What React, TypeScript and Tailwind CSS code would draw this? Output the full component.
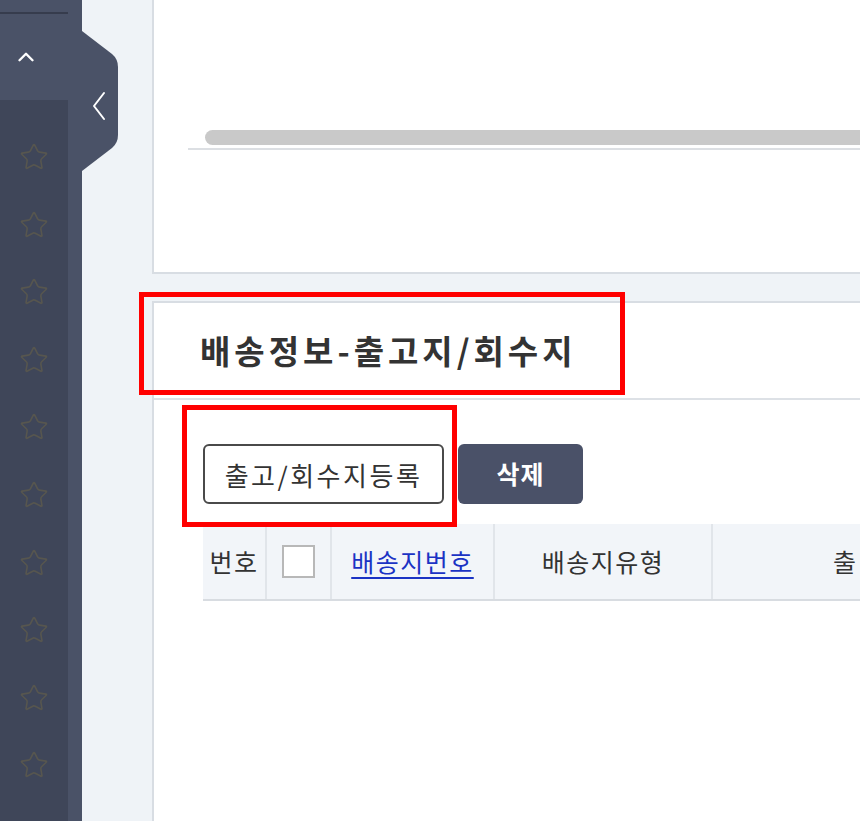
import React from 'react';
import { ChevronUp, Star } from 'lucide-react';

const font = { fontFamily: '"Noto Sans CJK KR", "Noto Sans", sans-serif' };

function Sidebar() {
  return (
    <div className="relative flex h-full w-[82px] shrink-0 flex-col bg-[#4a5267]">
      <div className="h-[100px] shrink-0">
        <div className="mt-[12px] h-[2px] w-[68px] bg-[#363c4d]" />
        <div className="flex w-[52px] justify-center pt-[30px]">
          <ChevronUp className="h-[26px] w-[26px] text-white" strokeWidth={2.2} />
        </div>
      </div>
      <div className="flex flex-1">
        <div className="flex w-[68px] flex-col items-center bg-[#3f4659] pt-[42px]">
          {Array.from({ length: 10 }).map((_, i) => (
            <div key={i} className="flex h-[67.6px] shrink-0 items-start justify-center">
              <Star className="h-[30px] w-[30px] text-[#57564f]" strokeWidth={1.3} />
            </div>
          ))}
        </div>
        <div className="w-[14px] bg-[#4a5267]" />
      </div>
    </div>
  );
}

function CollapseTab() {
  return (
    <div className="absolute left-[82px] top-[31px] h-[140px] w-[37px]">
      <svg width="37" height="140" viewBox="0 0 37 140" className="absolute inset-0">
        <path d="M0 0 L30 23 Q36 28 36 36 L36 104 Q36 112 30 117 L0 140 Z" fill="#4a5267" />
      </svg>
      <svg width="16" height="30" viewBox="0 0 16 30" className="absolute left-[9px] top-[60px]">
        <path d="M13 2 L3 15 L13 28" fill="none" stroke="white" strokeWidth="2" strokeLinecap="round" strokeLinejoin="round" />
      </svg>
    </div>
  );
}

export default function App() {
  return (
    <div className="relative flex h-[821px] w-[860px] overflow-hidden bg-[#eff3f7]" style={font}>
      <Sidebar />
      <CollapseTab />
      <div className="flex flex-1 flex-col pl-[70px]">
        <div className="h-[274px] shrink-0 border-b-2 border-l-2 border-[#d8dde3] bg-white">
          <div className="pl-[51px] pt-[130px]">
            <div className="h-[15px] rounded-l-full bg-[#c9c9c9]" />
          </div>
          <div className="ml-[34px] mt-[3px] h-[2px] bg-[#dcdfe3]" />
        </div>
        <div className="mt-[27px] flex flex-1 flex-col border-l-2 border-t-2 border-[#d8dde3] bg-white">
          <div className="flex h-[97px] items-center border-b-2 border-[#dde1e6] pl-[46px]">
            <h2 className="text-[33px] font-bold tracking-[4px] text-[#333]">배송정보-출고지/회수지</h2>
          </div>
          <div className="flex gap-[14px] pl-[49px] pt-[44px]">
            <button className="h-[60px] w-[241px] rounded-[6px] border-2 border-[#4a4a4a] bg-white text-[26px] tracking-[2.5px] text-[#333]">
              출고/회수지등록
            </button>
            <button className="h-[60px] w-[125px] rounded-[6px] bg-[#4a5168] text-[25px] font-bold tracking-[1px] text-white">
              삭제
            </button>
          </div>
          <div className="ml-[49px] mt-[20px] flex h-[77px] border-b-2 border-[#d8dce1] bg-[#f2f5f9] text-[25px] tracking-[1.5px] text-[#333]">
            <div className="flex w-[64px] items-center justify-center border-r-2 border-[#e1e5ea]">번호</div>
            <div className="flex w-[65px] items-center justify-center border-r-2 border-[#e1e5ea]">
              <div className="h-[33px] w-[33px] border-2 border-[#b8b8b8] bg-white" />
            </div>
            <div className="flex w-[163px] items-center justify-center border-r-2 border-[#e1e5ea]">
              <span className="text-[#1b33c4] underline underline-offset-[5px]">배송지번호</span>
            </div>
            <div className="flex w-[218px] items-center justify-center border-r-2 border-[#e1e5ea]">배송지유형</div>
            <div className="flex flex-1 items-center pl-[120px]">
              <span>출</span>
            </div>
          </div>
        </div>
      </div>
      <div className="absolute left-[139px] top-[292px] h-[103px] w-[486px] border-[5px] border-[#f00]" />
      <div className="absolute left-[182px] top-[405px] h-[122px] w-[275px] border-[5px] border-[#f00]" />
    </div>
  );
}
